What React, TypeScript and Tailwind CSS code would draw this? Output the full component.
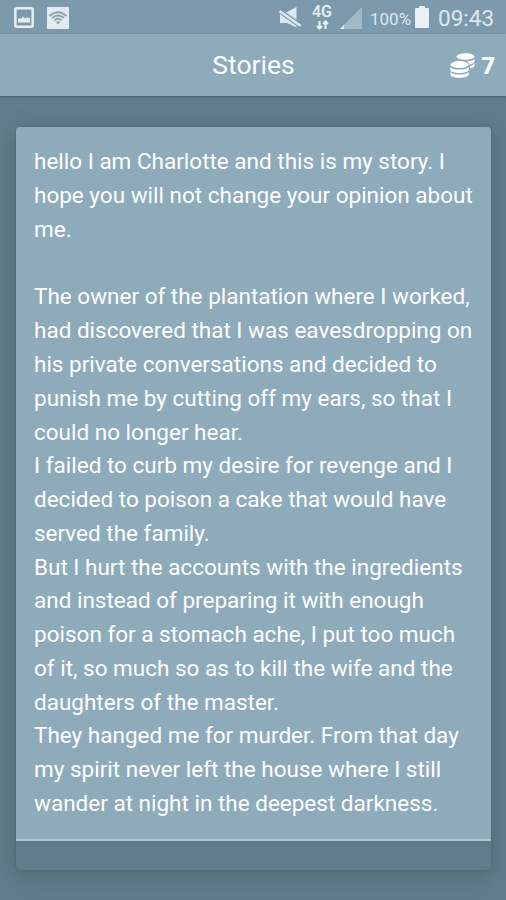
const story = [
	["hello I am Charlotte and this is my story. I", "hope you will not change your opinion about", "me."],
	[],
	[
		"The owner of the plantation where I worked,",
		"had discovered that I was eavesdropping on",
		"his private conversations and decided to",
		"punish me by cutting off my ears, so that I",
		"could no longer hear.",
	],
	["I failed to curb my desire for revenge and I", "decided to poison a cake that would have", "served the family."],
	[
		"But I hurt the accounts with the ingredients",
		"and instead of preparing it with enough",
		"poison for a stomach ache, I put too much",
		"of it, so much so as to kill the wife and the",
		"daughters of the master.",
	],
	["They hanged me for murder. From that day", "my spirit never left the house where I still", "wander at night in the deepest darkness."],
];

function PictureIcon() {
	return (
		<svg width="20" height="21" viewBox="0 0 20 21" fill="none">
			<rect x="1.3" y="1.3" width="17.4" height="18.4" rx="1.5" stroke="#e3eef4" strokeWidth="2.6" />
			<path d="M4 15.500v-3.500l2-1 1 1 2-2.500 2 2 2-1.500 1 1.500 2-1v5z" fill="#e3eef4" />
		</svg>
	);
}

function WifiBadgeIcon() {
	return (
		<svg width="22" height="22" viewBox="0 0 22 22" fill="none">
			<rect width="22" height="22" rx="1" fill="#e3ebf1" />
			<g stroke="#8fa3af" strokeWidth="1.8">
				<path d="M2.500 9Q11 1.500 19.500 9" />
				<path d="M5 11Q11 6 17 11" />
				<path d="M7.500 13.200Q11 10.300 14.500 13.200" />
			</g>
			<path d="M8.500 14.500h5L11 17.500z" fill="#8fa3af" />
		</svg>
	);
}

function MuteIcon() {
	return (
		<svg width="23" height="21" viewBox="0 0 23 21" fill="none">
			<path d="M1 5h7L17.500 0v20.500L8 16H1z" fill="#dce8ef" />
			<path d="M0 3.500L22 19" stroke="#7c9aab" strokeWidth="5" />
			<path d="M.5 4L21.500 18.800" stroke="#dce8ef" strokeWidth="2.600" />
		</svg>
	);
}

function DataArrowsIcon() {
	return (
		<svg width="13" height="10" viewBox="0 0 13 10" fill="none" stroke="#e9f3f8" strokeWidth="2">
			<path d="M3.500 1v7M1 6l2.500 2.500L6 6M9.500 9V2M7 4l2.500-2.500L12 4" />
		</svg>
	);
}

function SignalIcon() {
	return (
		<svg width="22" height="22" viewBox="0 0 22 22">
			<path d="M22 0v22H0z" fill="#a2bac7" />
			<path d="M4 18v4H0z" fill="#e5eff4" />
		</svg>
	);
}

function BatteryIcon() {
	return (
		<svg width="14" height="22" viewBox="0 0 14 22" fill="#e8f1f6">
			<path d="M4 0h6v2h3q1 0 1 1v18q0 1-1 1H1q-1 0-1-1V3q0-1 1-1h3z" />
		</svg>
	);
}

function CoinsIcon() {
	return (
		<svg width="25" height="25" viewBox="0 0 25 25" fill="#fff">
			<ellipse cx="15.500" cy="3.500" rx="9" ry="3.300" />
			<path d="M24.500 5.700v2.600c0 1.600-2 2.700-5 3.100-.4-1.300-1.500-2.300-3-3 3.600 0 6.800-.9 8-2.700z" />
			<path d="M24.500 10.600v2c0 1.400-1.800 2.400-4.500 2.900v-2.700c1.900-.3 3.600-1 4.500-2.200z" />
			<ellipse cx="9.500" cy="11.400" rx="9.400" ry="4.300" fill="#8eabbc" />
			<ellipse cx="9.500" cy="11.600" rx="9.200" ry="3.500" />
			<path d="M.3 14c1.600 1.900 5 2.500 9.200 2.500s7.600-.6 9.200-2.500v2.800c0 2-3.900 3.200-9.200 3.200S.3 18.800.3 16.800z" />
			<path d="M.3 18.900c1.600 1.900 5 2.500 9.200 2.500s7.600-.6 9.200-2.500v2.600c0 2-3.900 3.200-9.200 3.200S.3 23.500.3 21.500z" />
		</svg>
	);
}

function StatusBar() {
	return (
		<div className="flex h-[34px] shrink-0 justify-between bg-[#7c9aab] pt-[7px] text-[#dce8ef]">
			<div className="flex gap-[13px] pl-[14px]">
				<PictureIcon />
				<WifiBadgeIcon />
			</div>
			<div className="flex pr-3">
				<div className="mr-[10px]">
					<MuteIcon />
				</div>
				<div className="mr-[8px] flex w-5 flex-col items-center">
					<span className="-mt-[4px] text-[16px] leading-[17px] font-medium text-[#e9f3f8]">4G</span>
					<DataArrowsIcon />
				</div>
				<SignalIcon />
				<span className="ml-[8px] w-[41px] text-[17px] leading-[24px] whitespace-nowrap">100%</span>
				<div className="ml-[4px] -mt-px">
					<BatteryIcon />
				</div>
				<span className="ml-[9px] w-[56px] text-[22.500px] leading-[23px] whitespace-nowrap">09:43</span>
			</div>
		</div>
	);
}

function Header({ coins }: { coins: number }) {
	return (
		<header className="relative flex h-[62px] shrink-0 items-center justify-center bg-[#8eabbc] text-white shadow-[0_1px_2px_rgba(50,80,95,0.6)]">
			<h1 className="pl-px text-[26.500px] leading-8">Stories</h1>
			<div className="absolute top-[18px] right-[11px] flex items-center gap-[6px]">
				<CoinsIcon />
				<span className="font-['Open_Sans'] text-[24px] leading-[26px] font-bold">{coins}</span>
			</div>
		</header>
	);
}

function StoryCard() {
	return (
		<article className="h-[743px] overflow-hidden rounded-[4px] bg-[#607d8d] shadow-[0_5px_20px_rgba(65,90,90,0.5),0_0_3px_rgba(60,85,90,0.5)]">
			<div className="h-[714px] border-b-2 border-[#b1c5d0] bg-[#8eabbc] px-[18px] pt-[18.400px] text-[22.500px] leading-[33.760px] text-white">
				{story.map((lines, i) => (
					<p key={i} className="min-h-[33.760px]">
						{lines.map((line) => (
							<span key={line} className="block whitespace-nowrap">
								{line}
							</span>
						))}
					</p>
				))}
			</div>
		</article>
	);
}

export default function App() {
	return (
		<div className="flex h-[900px] w-[506px] flex-col overflow-hidden bg-[#607d8d] font-['Roboto',sans-serif]">
			<StatusBar />
			<Header coins={7} />
			<main className="pt-[31px] pr-[15px] pl-4">
				<StoryCard />
			</main>
		</div>
	);
}
